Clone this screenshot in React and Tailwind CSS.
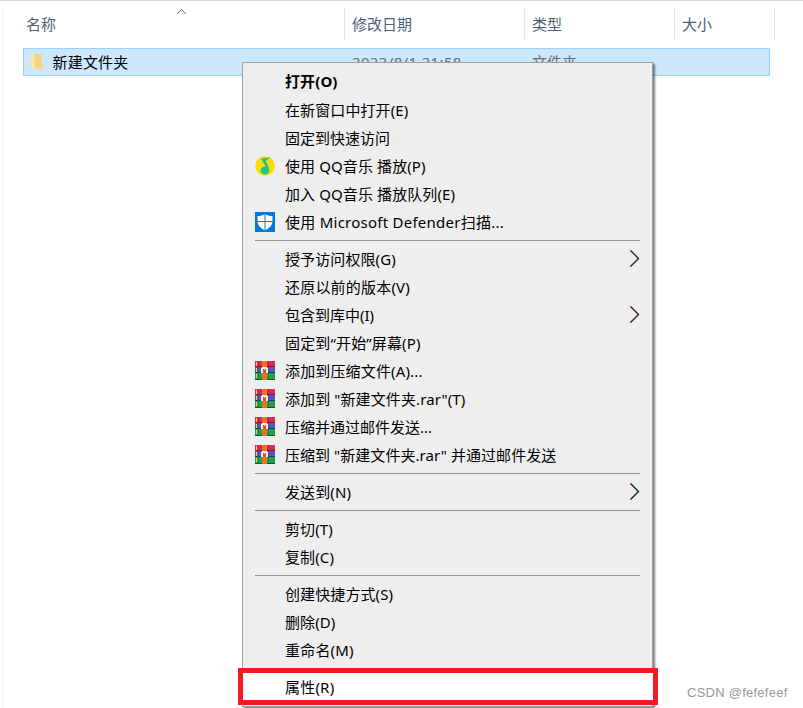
import React from 'react'

const QQMusicIcon = () => (
  <svg width="20" height="20" viewBox="0 0 20 20">
    <circle cx="10" cy="10" r="9.8" fill="#ffdc00" />
    <path d="M6.6 2.4 C9.5 2.4 12.5 1.8 15.2 0.8 C14 2.6 12.4 3.8 10.8 4.8 L13.8 11.6 C15.4 15.4 13.2 18.5 10 18.5 C7.4 18.5 5.5 16.8 5.5 14.5 C5.5 12 7.8 10.2 10.6 10.6 L6.4 3.6 Z" fill="#1fc488" />
  </svg>
)

const DefenderIcon = () => (
  <svg width="20" height="20" viewBox="0 0 20 20">
    <rect width="20" height="20" fill="#0078d7" />
    <path d="M10 2 C8 3.5 5.2 4 2.5 4 V9 C2.5 13 5.5 16.4 10 18.2 C14.5 16.4 17.5 13 17.5 9 V4 C14.8 4 12 3.5 10 2 Z" fill="#fff" />
    <path d="M10 1.5 V18.5 M2 9.5 H18" stroke="#0078d7" strokeWidth="1" />
  </svg>
)

const RarIcon = () => (
  <svg width="20" height="20" viewBox="0 0 20 20" shapeRendering="crispEdges">
    <rect y="0" width="20" height="6" fill="#d52b56" />
    <rect y="5" width="20" height="1" fill="#8f1638" />
    <rect y="6" width="20" height="6" fill="#5357bd" />
    <rect y="11" width="20" height="1" fill="#2c2e78" />
    <rect y="12" width="20" height="6" fill="#22a04a" />
    <rect y="18" width="20" height="1" fill="#0d5a26" />
    <path d="M1 1h1v4H1zM1 7h1v4H1zM1 13h1v4H1z" fill="#ffd91a" />
    <path d="M3 0h1v19H3zM13 0h1v19h-1z" fill="#000" opacity=".15" />
    <rect x="7" y="0" width="5" height="19" fill="#e8731c" />
    <path d="M7 6h5v1h1v5h-2V8H8v4H6V7h1z" fill="#f8f2ec" />
    <rect x="8" y="8" width="3" height="4" fill="#d9501e" />
    <rect x="9" y="6" width="1" height="3" fill="#f6d9c0" />
  </svg>
)

const FolderIcon = () => (
  <svg width="14" height="18" viewBox="0 0 14 18">
    <path d="M4 1 H11.5 V11 H13 V15.5 H4 Z" fill="#f7d47a" />
    <path d="M1 1.5 H3.2 L4.8 3 V15.6 L3.2 17 L1 15.6 Z" fill="#ffe6a4" />
  </svg>
)

const Arrow = ({ color }) => (
  <svg width="11" height="18" viewBox="0 0 11 18" fill="none">
    <path d="M1 0.5 L9 8.5 L1 16.5" stroke="#e8a33a" strokeWidth="0.7" />
    <path d="M2 0.5 L10 8.5 L2 16.5" stroke="#3f8fd0" strokeWidth="0.7" />
    <path d="M1.5 0.5 L9.5 8.5 L1.5 16.5" stroke={color} strokeWidth="1.1" />
  </svg>
)

const groups = [
  [
    { label: '打开(O)', bold: true },
    { label: '在新窗口中打开(E)' },
    { label: '固定到快速访问', tracking: 'tracking-normal' },
    { label: '使用 QQ音乐 播放(P)', icon: <QQMusicIcon /> },
    { label: '加入 QQ音乐 播放队列(E)' },
    { label: '使用 Microsoft Defender扫描...', icon: <DefenderIcon />, tracking: 'tracking-[0.25px]' },
  ],
  [
    { label: '授予访问权限(G)', arrow: '#4a0810' },
    { label: '还原以前的版本(V)', tracking: 'tracking-[0.2px]' },
    { label: '包含到库中(I)', arrow: '#4a0810', tracking: 'tracking-normal' },
    { label: '固定到“开始”屏幕(P)', tracking: 'tracking-[0.15px]' },
    { label: '添加到压缩文件(A)...', icon: <RarIcon />, tracking: 'tracking-[0.15px]' },
    { label: '添加到 "新建文件夹.rar"(T)', icon: <RarIcon /> },
    { label: '压缩并通过邮件发送...', icon: <RarIcon />, tracking: 'tracking-normal' },
    { label: '压缩到 "新建文件夹.rar" 并通过邮件发送', icon: <RarIcon />, tracking: 'tracking-[0.05px]' },
  ],
  [{ label: '发送到(N)', arrow: '#0a1638' }],
  [{ label: '剪切(T)' }, { label: '复制(C)' }],
  [{ label: '创建快捷方式(S)' }, { label: '删除(D)' }, { label: '重命名(M)', tracking: 'tracking-[0.2px]' }],
  [{ label: '属性(R)' }],
]

const MenuItem = ({ item }) => (
  <div className="flex h-7 items-center pl-3 pr-3">
    <div className="w-[30px] shrink-0">{item.icon}</div>
    <div className={item.bold ? 'flex-1 whitespace-pre pb-0.5 font-bold' : 'flex-1 whitespace-pre'}>
      <span className={item.tracking || 'tracking-[0.1px]'}>{item.label}</span>
    </div>
    {item.arrow && <Arrow color={item.arrow} />}
  </div>
)

const ContextMenu = () => (
  <div className="absolute left-[242px] top-[62px] h-[645px] w-[411px] border border-[#a0a0a0] bg-[#eeeeee] pt-[5px] text-black shadow-[2px_2px_2px_rgba(0,0,0,0.5)]">
    {groups.map((items, i) => (
      <div key={i}>
        {i > 0 && <div className="mx-3 mb-1 mt-1 h-px bg-[#919191]" />}
        {items.map((item) => <MenuItem key={item.label} item={item} />)}
      </div>
    ))}
  </div>
)

const Header = () => (
  <div className="relative ml-6 mt-[7px] flex h-8 items-center text-[#4c607a]">
    <div className="flex h-full w-[321px] items-center border-r border-[#e5e5e5] pl-0.5">名称</div>
    <div className="flex h-full w-[180px] items-center border-r border-[#e5e5e5] pl-[7px]">修改日期</div>
    <div className="flex h-full w-[150px] items-center border-r border-[#e5e5e5] pl-[7px]">类型</div>
    <div className="flex h-full w-[100px] items-center border-r border-[#e5e5e5] pl-[7px]">大小</div>
    <svg className="absolute left-[152px] top-0" width="11" height="7" viewBox="0 0 11 7" fill="none">
      <path d="M1 6 L5.5 1.5 L10 6" stroke="#666" />
    </svg>
  </div>
)

const App = () => {
  return (
    <div className="relative h-[708px] w-[803px] overflow-hidden border-t border-[#d9d9d9] bg-white font-['Noto_Sans','Noto_Sans_CJK_SC',sans-serif] text-[15px] leading-[28px]">
      <div className="absolute left-0.5 top-[7px] h-full w-px bg-[#f3f3f3]" />
      <Header />
      <div className="ml-[23px] mt-2 flex h-7 w-[747px] items-center border border-[#99d1ff] bg-[#cce8ff] text-black">
        <div className="ml-[6px] w-[22px]"><FolderIcon /></div>
        <span className="w-[300px] pl-[0.5px] tracking-[0.2px]">新建文件夹</span>
        <span className="w-[180px] tracking-[0.35px] text-[#6d6d6d]">2023/8/1 21:58</span>
        <span className="text-[#6d6d6d]">文件夹</span>
      </div>

      <div className="absolute -top-px left-0">
        <ContextMenu />
        <div className="absolute left-[238px] top-[668px] h-[37px] w-[420px] border-[5px] border-[#ed1c24] bg-white pl-[42px] leading-[28px] tracking-[0.2px] text-black">
          属性(R)
        </div>
        <span className="absolute left-[687px] top-[679px] whitespace-nowrap font-['Liberation_Sans',sans-serif] text-[13px] tracking-[0.25px] text-[#999]">
          CSDN @fefefeef
        </span>
      </div>
    </div>
  )
}

export default App
